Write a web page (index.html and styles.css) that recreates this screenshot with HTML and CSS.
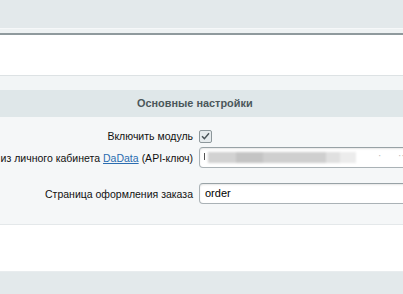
FILE: index.html
```html
<!DOCTYPE html>
<html lang="ru">
<head>
    <meta charset="UTF-8">
    <meta name="viewport" content="width=device-width, initial-scale=1.0">
    <title>Настройки модуля</title>
    <link rel="stylesheet" href="styles.css">
</head>
<body>
    <div class="top-bar"></div>
    <div class="top-border"></div>

    <div class="white-area"></div>

    <!-- Settings block -->
    <div class="settings">
        <div class="tabs-gap"></div>
        <div class="section-title">Основные настройки</div>

        <div class="settings-body">
            <div class="row row-check">
                <div class="label">Включить модуль</div>
                <div class="value">
                    <span class="checkbox">
                        <svg width="9" height="8" viewBox="0 0 9 8">
                            <path d="M1 4.2 L3.4 6.6 L8 1.2" fill="none" stroke="#4a5458" stroke-width="1.4"/>
                        </svg>
                    </span>
                </div>
            </div>

            <div class="row">
                <div class="label">Токен из личного кабинета <a href="#">DaData</a> (API-ключ)</div>
                <div class="value">
                    <div class="input input-key">
                        <span class="caret"></span>
                        <span class="blur"></span>
                        <span class="dots">·&nbsp;&nbsp;&nbsp;&nbsp;&nbsp;&nbsp;··</span>
                    </div>
                </div>
            </div>

            <div class="row">
                <div class="label">Страница оформления заказа</div>
                <div class="value">
                    <div class="input">order</div>
                </div>
            </div>
        </div>
    </div>

    <div class="white-bottom"></div>
    <div class="bottom-bar"></div>
</body>
</html>
```

FILE: styles.css
```css
html, body {
    margin: 0;
    padding: 0;
    overflow: hidden;
}
body {
    font-family: Arial, "Liberation Sans", sans-serif;
    font-size: 10.5px;
    color: #000;
    background: #fff;
    width: 403px;
    height: 294px;
}
.top-bar {
    height: 28px;
    background: #e3e9eb;
}
.top-border {
    height: 4px;
    background: #eef2f3;
    border-top: 1px solid #f6f8f9;
    border-bottom: 2px solid #8f9a9d;
}
.white-area {
    height: 40px;
    background: #fff;
}
.settings {
    border-top: 1px solid #dde2e4;
}
.tabs-gap {
    height: 14px;
    background: #f2f5f6;
}
.section-title {
    height: 27px;
    line-height: 27px;
    background: #dfe7e9;
    color: #4b575b;
    font-weight: bold;
    font-size: 10.9px;
    padding-left: 137px;
}
.settings-body {
    background: #f5f7f8;
    padding: 9px 0 20px;
    border-bottom: 1px solid #e4e8ea;
}
.row {
    display: flex;
    align-items: center;
    height: 21px;
    margin-bottom: 15px;
}
.row:last-child {
    margin-bottom: 0;
}
.row-check {
    height: 20px;
    margin-bottom: 1px;
}
.label {
    width: 193px;
    flex-shrink: 0;
    display: flex;
    justify-content: flex-end;
    white-space: nowrap;
    color: #111;
}
.label a {
    color: #2a6cb0;
    text-decoration: underline;
    margin: 0 3px;
}
.value {
    padding-left: 6px;
    display: flex;
    align-items: center;
}
.checkbox {
    width: 11px;
    height: 11px;
    border: 1px solid #8d979b;
    border-radius: 2px;
    background: #e6ebed;
    display: flex;
    align-items: center;
    justify-content: center;
}
.input {
    width: 260px;
    height: 19px;
    line-height: 19px;
    border: 1px solid #aab2b6;
    border-top-color: #98a2a6;
    border-radius: 4px;
    background: #fff;
    box-shadow: inset 0 1px 2px rgba(0, 0, 0, 0.1);
    padding-left: 5px;
    font-size: 11px;
    color: #000;
}
.input-key {
    position: relative;
}
.caret {
    position: absolute;
    left: 4px;
    top: 5px;
    width: 1px;
    height: 7px;
    background: #555;
}
.blur {
    position: absolute;
    left: 8px;
    top: 4px;
    width: 148px;
    height: 11px;
    background: linear-gradient(90deg, #d2d2d2 0, #d2d2d2 28px, #c4c4c4 28px, #c4c4c4 55px, #cfcfcf 55px, #cfcfcf 118px, #e0e0e0 118px, #e0e0e0 132px, #ececec 132px);
    filter: blur(1px);
}
.dots {
    position: absolute;
    left: 178px;
    top: -2px;
    color: #bbb;
    font-size: 10px;
}
.white-bottom {
    height: 46px;
    border-bottom: 1px solid #e8ecee;
    background: #fff;
}
.bottom-bar {
    height: 30px;
    background: #e3e9eb;
}
```
